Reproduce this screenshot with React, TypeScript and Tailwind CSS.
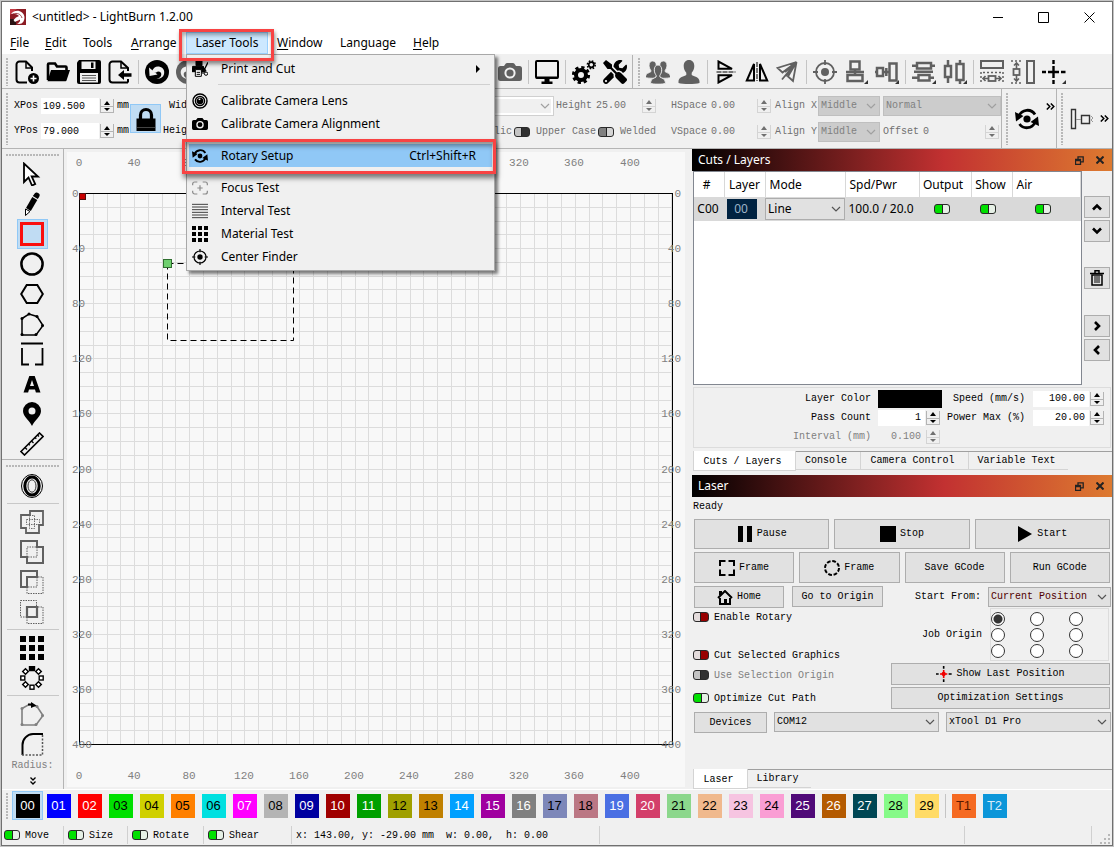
import React, { useState } from "react";
import type { ReactNode } from "react";
import { FaTools } from "react-icons/fa";

const MONO = "font-['Liberation_Mono',monospace] text-[10px] leading-3";
const UI = "font-['Noto_Sans',sans-serif] text-[12px] leading-4";

type IconProps = { children: ReactNode; size?: number; color?: string; sw?: number };

function Ico({ children, size = 24, color = "#000", sw = 2 }: IconProps) {
  return (
    <svg
      width={size}
      height={size}
      viewBox="0 0 24 24"
      fill="none"
      stroke={color}
      strokeWidth={sw}
      className="block shrink-0"
      aria-hidden="true"
    >
      {children}
    </svg>
  );
}

const GRAY = "#606060";

const NewFile = () => (
  <Ico sw={2}>
    <path d="M12 22.500H4.500a3 3 0 0 1-3-3V4.500a3 3 0 0 1 3-3H11l6 6V11" />
    <path d="M11 1.500V8h6" strokeWidth={1.500} />
    <circle cx="18.500" cy="18.500" r="5.500" fill="#000" stroke="none" />
    <path d="M18.500 15.500v6M15.500 18.500h6" stroke="#fff" strokeWidth={1.600} />
  </Ico>
);
const OpenFile = () => (
  <Ico>
    <path d="M2 20V4.500C2 4 2.300 3.500 3 3.500h6l2 3h8.500c.8 0 1 .5 1 1V10" strokeWidth={2.600} />
    <path d="M5 10h19l-3.500 10.500a1 1 0 0 1-1 .8H1.500z" fill="#000" stroke="none" />
  </Ico>
);
const SaveFile = () => (
  <Ico>
    <path d="M2 0h20a2 2 0 0 1 2 2v20a2 2 0 0 1-2 2H2a2 2 0 0 1-2-2V2.500z" fill="#000" stroke="none" />
    <path d="M4.500 1.500h14V9h-14z" fill="#f0f0f0" stroke="none" />
    <path d="M14 2.500h2.500V8H14z" fill="#000" stroke="none" />
    <path d="M3 13h18v9.500H3z" fill="#f0f0f0" stroke="none" />
    <path d="M5 15.500h14M5 18h14M5 20.500h14" strokeWidth={1} stroke="#555" />
  </Ico>
);
const ExportFile = () => (
  <Ico>
    <path d="M20 22.500H4.500a3 3 0 0 1-3-3V4.500a3 3 0 0 1 3-3H13l7 6.500V11M20 19v3.500" />
    <path d="M13 1.500V8h7" strokeWidth={1.500} />
    <path d="M10 15l6-5v3.300h7.500v3.400H16V20z" fill="#000" stroke="none" />
  </Ico>
);
const Undo = ({ color = "#000", flip = false }: { color?: string; flip?: boolean }) => (
  <Ico color={color}>
    <g transform={flip ? "translate(24 0) scale(-1 1)" : undefined}>
      <circle cx="12" cy="12" r="12" fill={color} stroke="none" />
      <path
        d="M7 11.500C8 8 11 6 14 6.600c4 .7 6 4 5 7.600-.8 3-3.800 5-7.500 4.600 3-.5 5-2.300 4.800-4.800-.2-2.400-3-3.500-5.500-1.300"
        fill="#f0f0f0"
        stroke="none"
      />
      <path d="M4 7.500l.6 8.500 7.900-1.500z" fill="#f0f0f0" stroke="none" />
    </g>
  </Ico>
);
const Camera = ({ color = "#000", size = 24 }: { color?: string; size?: number }) => (
  <Ico size={size}>
    <path
      d="M2.500 6H6l1.800-2.400c.3-.4.700-.6 1.200-.6h6c.5 0 .9.200 1.200.6L18 6h3.500A2.500 2.500 0 0 1 24 8.500v10a2.500 2.500 0 0 1-2.500 2.500h-19A2.500 2.500 0 0 1 0 18.500v-10A2.500 2.500 0 0 1 2.500 6z"
      fill={color}
      stroke="none"
    />
    <circle cx="12" cy="13" r="4.600" stroke="#f0f0f0" strokeWidth={2} />
  </Ico>
);
const Monitor = () => (
  <Ico>
    <rect x="1" y="1" width="22" height="17" rx="1" />
    <path d="M1 16.500h22v2H1zM9.500 18h5v4h-5zM6.500 21.500h11V24h-11z" fill="#000" stroke="none" />
  </Ico>
);
const Gears = () => (
  <Ico>
    <circle cx="9" cy="15" r="5" strokeWidth={4} />
    <circle cx="9" cy="15" r="7.600" strokeWidth={3} strokeDasharray="3.200 2.769" />
    <circle cx="19.300" cy="4.800" r="2.600" strokeWidth={1.700} />
    <circle cx="19.300" cy="4.800" r="3.900" strokeWidth={1.600} strokeDasharray="1.600 1.463" />
  </Ico>
);
const personPath = "M12 0c3.300 0 5.300 2.500 5.300 6 0 3-1.300 5.500-2.600 6.700v2.300c2 1.400 7.800 2 7.800 6.500V23c-4 1.300-17 1.300-21 0v-1.500C1.500 17 7.300 16.400 9.300 15v-2.300C8 11.500 6.700 9 6.700 6c0-3.500 2-6 5.300-6z";
const Person = () => (
  <Ico>
    <path d={personPath} fill={GRAY} stroke="none" />
  </Ico>
);
const People = () => (
  <Ico>
    <g fill={GRAY} stroke="#f0f0f0" strokeWidth={1.200}>
      <path d={personPath} transform="translate(-1.500 1) scale(.68 .72)" />
      <path d={personPath} transform="translate(9.200 1) scale(.68 .72)" />
      <path d={personPath} transform="translate(3.600 5) scale(.7 .8)" />
    </g>
  </Ico>
);
const FlipV = () => (
  <Ico>
    <path d="M4.500 1.500v7.300H18zM4.500 22.500v-7.300H18z" />
    <path d="M2.500 12h19" stroke="#777" strokeWidth={2} strokeDasharray="5 1" />
  </Ico>
);
const FlipH = () => (
  <Ico>
    <path d="M9 4v16.500H1.800zM15 4v16.500h7.200z" />
    <path d="M12 2v19" stroke="#777" strokeWidth={2} strokeDasharray="5 1" />
  </Ico>
);
const Plane = () => (
  <Ico color={GRAY} sw={1.800}>
    <path d="M20.500 2L1.500 8l5 4.500zM20.500 2l-3.500 19-5-4.500zM20.500 2L9 12M20.500 2L6 19.500M20.500 2L10 16" />
  </Ico>
);
const Target = ({ color = GRAY, size = 24 }: { color?: string; size?: number }) => (
  <Ico color={color} size={size} sw={1.800}>
    <circle cx="12" cy="12" r="9" />
    <circle cx="12" cy="12" r="4" fill={color} stroke="none" />
    <path d="M12 0v5M12 19v5M0 12h5M19 12h5" />
  </Ico>
);
const Corner = () => <path d="M24 20v4h-4z" fill="#333" stroke="none" />;
const AlignV = () => (
  <Ico color={GRAY} sw={2.500}>
    <rect x="6.500" y="1.500" width="9" height="8" />
    <rect x="3.500" y="15" width="15" height="6" />
    <path d="M11 9.500V15M2 12h18" />
    <Corner />
  </Ico>
);
const AlignH = () => (
  <Ico color={GRAY} sw={2.500}>
    <rect x="2" y="8" width="6" height="8" />
    <rect x="14.500" y="3.500" width="7" height="17" />
    <path d="M8 12h7M0 12h2M11.300 8v8" />
    <Corner />
  </Ico>
);
const DistV = () => (
  <Ico color={GRAY} sw={2.500}>
    <rect x="5" y="3" width="14" height="5.500" />
    <rect x="6.500" y="15" width="11" height="5.500" />
    <path d="M0 5.700h5M19 5.700h4M0 17.700h6M18 17.700h4M2 11.800h19" />
    <Corner />
  </Ico>
);
const DistH = () => (
  <Ico color={GRAY} sw={2.500}>
    <rect x="2" y="6" width="6" height="11" />
    <rect x="13.500" y="4" width="7" height="16" />
    <path d="M5 0v6M5 17v6M17 0v4M17 20v4" />
    <Corner />
  </Ico>
);
const SpaceW = () => (
  <Ico color={GRAY} sw={2}>
    <rect x="1" y="1" width="22" height="7" />
    <path d="M1 12v12M23 12v12M3 12.500h19" strokeDasharray="2 2" strokeWidth={1.500} />
    <rect x="8.500" y="16" width="7" height="5" strokeWidth={1.800} />
    <path d="M3 18.500h5M16 18.500h5M5.500 16L3 18.500 5.500 21M18.500 16l2.500 2.500-2.500 2.500" strokeWidth={1.600} />
  </Ico>
);
const SpaceH = () => (
  <Ico color={GRAY} sw={2}>
    <rect x="16" y="1" width="7" height="22" />
    <path d="M0 1h11M0 23h11" strokeDasharray="2 2" strokeWidth={1.500} />
    <rect x="2.500" y="9" width="6" height="6" strokeWidth={1.800} />
    <path d="M5.500 3v6M5.500 15v6M3 5.500L5.500 3 8 5.500M3 18.500L5.500 21 8 18.500" strokeWidth={1.600} />
  </Ico>
);
const Cross = ({ red = false, size = 24 }: { red?: boolean; size?: number }) => (
  <Ico size={size} sw={2.400}>
    <path d="M11.500 0v4M11.500 20v4M0 12h4M19 12h4.500" />
    <path d="M11.500 6v12M6 12h11" stroke={red ? "#f00000" : "#000"} />
    {red ? <circle cx="11.500" cy="12" r="3.200" fill="#f00000" stroke="none" /> : <Corner />}
  </Ico>
);
const Lock = () => (
  <Ico>
    <path d="M6.500 12V8a5.500 5.500 0 0 1 11 0v4" strokeWidth={3.200} />
    <path d="M2.500 11.500h19V24h-19z" fill="#000" stroke="none" />
    <path d="M3 20.500h18" stroke="#444" strokeWidth={1} />
  </Ico>
);
const Rotary = ({ size = 24 }: { size?: number }) => (
  <Ico size={size} sw={2.800}>
    <path d="M4 9a9 9 0 0 1 16-1.500M20 15.500A9 9 0 0 1 4.500 17" />
    <circle cx="12" cy="12" r="3.600" fill="#000" stroke="none" />
    <path d="M0 5l1 9.500L8.500 9zM24 19l-1-9.500-7.500 5.500z" fill="#000" stroke="none" />
  </Ico>
);
const More = () => (
  <svg width="9" height="7" fill="none" stroke="#000" strokeWidth="1.500" className="shrink-0" aria-hidden="true">
    <path d="M.8.500l3 3-3 3M4.800.500l3 3-3 3" />
  </svg>
);
const Printer = () => (
  <Ico size={16} sw={1.500}>
    <path d="M6 0h9v7H6zM1 8h16v3l3 5H0v-6z" fill="#000" />
    <path d="M5 13h9v10H5z" fill="#fff" />
    <path d="M7 17h5M7 20h5" />
    <path d="M24 2l-5 10 2 3M16 8l3 6" strokeWidth={2} />
    <circle cx="21" cy="19" r="2.500" />
    <circle cx="16.500" cy="17" r="1.500" />
  </Ico>
);
const Lens = () => (
  <Ico size={16} sw={2.200}>
    <circle cx="12" cy="12" r="10.500" />
    <circle cx="12" cy="12" r="6.800" />
    <circle cx="12" cy="12" r="3.800" fill="#000" />
    <path d="M10 9.500h2.500" stroke="#fff" />
  </Ico>
);
const FocusIcon = () => (
  <Ico size={16} color="#8a8a8a" sw={1.800}>
    <path d="M1 8V6a3 3 0 0 1 3-3h4M16 3h4a3 3 0 0 1 3 3v2M23 16v2a3 3 0 0 1-3 3h-4M8 21H4a3 3 0 0 1-3-3v-2M12 8v8M8 12h8" />
  </Ico>
);
const LinesIcon = () => (
  <Ico size={16} color="#333" sw={1.400}>
    <path d="M0 2h24M0 6h24M0 10h24M0 14h24M0 18h24M0 22h24" />
  </Ico>
);
const DotsGrid = ({ size = 24 }: { size?: number }) => (
  <Ico size={size}>
    <path
      d="M0 0h6v6H0zM9 0h6v6H9zM18 0h6v6h-6zM0 9h6v6H0zM9 9h6v6H9zM18 9h6v6h-6zM0 18h6v6H0zM9 18h6v6H9zM18 18h6v6h-6z"
      fill="#000"
      stroke="none"
    />
  </Ico>
);

const cursorI = <Ico sw={1.800}><path d="M4 1.500V20l4.500-4.500 3.500 8 3.200-1.500-3.500-7.500H18z" fill="#fff" /></Ico>;
const pencilI = (
  <Ico>
    <path d="M14 2.500c1-2 2-2.500 3.500-1.800l1 .5c1.500.8 1.500 2 .7 3.500L17.800 7l-5-3z" fill="#000" stroke="none" />
    <path d="M12.300 5l5 3-6.500 11-4.800-3z" fill="#000" stroke="none" />
    <path d="M5.500 17l4.500 2.500-4.500 4z" strokeWidth={1} fill="#fff" />
  </Ico>
);
const rectI = <Ico><rect x="1.500" y="1.500" width="21" height="21" stroke="#fa0f0f" strokeWidth={3} /></Ico>;
const circleI = <Ico><circle cx="12" cy="12" r="10.600" strokeWidth={2.500} /></Ico>;
const hexI = <Ico><path d="M1.200 12L6.700 3h10.600l5.500 9-5.500 9H6.700z" /></Ico>;
const polyI = (
  <Ico sw={1.500}>
    <path d="M2 23V6.500L9 2l8 2.500 6 9L16 23z" />
    <g fill="#000" stroke="none"><circle cx="2" cy="6.500" r="1.500" /><circle cx="9" cy="2" r="1.500" /><circle cx="17" cy="4.500" r="1.500" /><circle cx="22.500" cy="13.500" r="1.500" /><circle cx="16" cy="22.500" r="1.500" /><circle cx="2" cy="22.500" r="1.500" /></g>
  </Ico>
);
const frameI = <Ico sw={1.800}><path d="M1 1.500h22M2 6v16.500h7M22.500 6v16.500H15" /></Ico>;
const textI = <Ico><path d="M3.500 20.500L9.300 4h5.400l5.800 16.500h-4.600l-.9-3H9l-.9 3zM10 14h4l-2-6z" fill="#000" stroke="none" fillRule="evenodd" /></Ico>;
const pinI = <Ico><path d="M12 0a9 9 0 0 1 9 9c0 6-6.500 9-9 15-2.500-6-9-9-9-15a9 9 0 0 1 9-9zm0 5.500a3.500 3.500 0 1 0 0 7 3.500 3.500 0 0 0 0-7z" fill="#000" stroke="none" fillRule="evenodd" /></Ico>;
const rulerI = (
  <Ico sw={1.600}>
    <path d="M1 19.500L19.500 1 23 4.500 4.500 23z" />
    <path d="M5 15.500l2 2M8.500 12l1.300 1.300M11.500 9l2 2M15 5.500l1.300 1.300M17.500 3l1.500 1.500" strokeWidth={1.300} />
  </Ico>
);
const offsetI = (
  <Ico>
    <ellipse cx="12" cy="12" rx="10.500" ry="11.500" strokeWidth={1} />
    <ellipse cx="12" cy="12" rx="7.200" ry="9" strokeWidth={3} />
    <ellipse cx="12" cy="12" rx="4" ry="6.200" strokeWidth={0.800} />
  </Ico>
);
const unionI = (
  <Ico color={GRAY} sw={1.800}>
    <path d="M10 1h13v14h-4v8H6v-5H1V5h9z" />
    <path d="M6.500 9.500h13v5h-13zM9.500 5.500h5v13h-5z" strokeWidth={0.900} strokeDasharray="1.500 1" />
  </Ico>
);
const weldI = (
  <Ico color={GRAY} sw={2}>
    <path d="M1 1h16v6h6v16H7v-6H1z" />
    <path d="M7 7h10v10H7z" strokeWidth={1} strokeDasharray="1.500 1" />
  </Ico>
);
const subI = (
  <Ico color={GRAY} sw={2}>
    <path d="M1 1h16v6H7v10H1z" />
    <path d="M7 17v6.500h16V7h-6v10H7" strokeWidth={1} strokeDasharray="1.500 1" />
  </Ico>
);
const interI = (
  <Ico color={GRAY} sw={1}>
    <path d="M.5.500h16V7M7 17H.5V.5M7 17v6.500h16V7h-6" strokeDasharray="1.500 1" />
    <path d="M7 7h10v10H7z" strokeWidth={2.200} />
  </Ico>
);
const circArrI = (
  <Ico sw={1.400}>
    <path d="M9.500 0h5v4.500h-5z" fill="#000" />
    <g fill="#fff">
      {[45, 90, 135, 180, 225, 270, 315].map((a) => (
        <rect key={a} x="10" y=".8" width="4" height="4" transform={`rotate(${a} 12 12)`} />
      ))}
    </g>
  </Ico>
);
const startPtI = (
  <Ico color="#808080" sw={1.600}>
    <path d="M2 23V6.500L9 2.500l8 2 6 9L16 23z" />
    <g fill="#808080" stroke="none"><circle cx="2" cy="6.500" r="1.500" /><circle cx="17" cy="4.500" r="1.500" /><circle cx="22.500" cy="13.500" r="1.500" /><circle cx="16" cy="22.500" r="1.500" /><circle cx="2" cy="22.500" r="1.500" /></g>
    <path d="M8 2.500h5" stroke="#000" strokeWidth={2} />
    <path d="M11 0l5.500 3.500L11 6z" fill="#000" stroke="none" />
  </Ico>
);
const radiusI = (
  <Ico>
    <path d="M2.500 23V13A11 11 0 0 1 13 2h10" strokeWidth={2} />
    <path d="M22.500 3v20H2" stroke="#555" strokeWidth={1.500} strokeDasharray="2 1.500" />
  </Ico>
);

function Handle({ row = false }: { row?: boolean }) {
  return row ? (
    <div className="mx-1 my-px h-[2px] shrink-0 self-stretch bg-[repeating-linear-gradient(90deg,#b8b8b8_0_2px,transparent_2px_3px)]" />
  ) : (
    <div className="mr-px w-[2px] shrink-0 self-stretch bg-[repeating-linear-gradient(180deg,#b8b8b8_0_2px,transparent_2px_3px)]" />
  );
}

function ToolBtn({ label, children }: { label: string; children?: ReactNode }) {
  return (
    <button aria-label={label} className="flex h-[31px] w-[31px] shrink-0 items-center justify-center pl-px">
      {children}
    </button>
  );
}
const Sep = () => <div className="ml-[3px] mr-[2px] h-6 w-px shrink-0 bg-[#c4c4c4]" />;

function Spin({ dim = false, label }: { dim?: boolean; label: string }) {
  const fill = dim ? "#707070" : "#000";
  const edge = dim ? "border-[#d4d4d4]" : "border-[#b4b4b4]";
  return (
    <div className="flex h-[14px] w-[14px] shrink-0 flex-col">
      <button aria-label={label + " up"} className={"flex h-[7px] items-center justify-center border-x " + edge}>
        <svg width="6" height="4" aria-hidden="true"><path d="M0 4l3-4 3 4z" fill={fill} /></svg>
      </button>
      <button aria-label={label + " down"} className={"flex h-[7px] items-center justify-center border-x border-y " + edge}>
        <svg width="6" height="3" aria-hidden="true"><path d="M0 0l3 3 3-3z" fill={fill} /></svg>
      </button>
    </div>
  );
}

const toggleLook = {
  green: "bg-[linear-gradient(90deg,#00e000_7px,#222_7px,#222_8px,#e6f0e6_8px)]",
  red: "bg-[linear-gradient(90deg,#e4dcdc_6px,#222_6px,#222_7px,#980000_7px)]",
  dark: "bg-[linear-gradient(90deg,#c4c4c4_6px,#222_6px,#222_7px,#303030_7px)]",
  gray: "bg-[linear-gradient(90deg,#808080_7px,#222_7px,#222_8px,#d4d4d4_8px)]",
};

function Toggle({ label, look, on = false, id }: { label: string; look: keyof typeof toggleLook; on?: boolean; id?: string }) {
  return (
    <input
      id={id}
      type="checkbox"
      aria-label={label}
      defaultChecked={on}
      className={"h-[10px] w-4 shrink-0 appearance-none rounded-[3px] border border-[#2a2a2a] " + toggleLook[look]}
    />
  );
}

function Drop({ label, value, width = "", look = "border-[#adadad] bg-[#e1e1e1] text-black", font = MONO, height = "h-5", dim = false }: {
  label: string; value: string; width?: string; look?: string; font?: string; height?: string; dim?: boolean;
}) {
  return (
    <div className={"relative shrink-0 " + width}>
      <select aria-label={label} className={"block w-full appearance-none border pl-[2px] pr-4 outline-none " + height + " " + look + " " + font}>
        <option>{value}</option>
      </select>
      <svg width="10" height="6" className="pointer-events-none absolute right-1 top-1/2 -translate-y-1/2" aria-hidden="true">
        <path d="M1 1l4 4 4-4" fill="none" stroke={dim ? "#a0a0a0" : "#555"} strokeWidth="1.200" />
      </svg>
    </div>
  );
}

function PosField({ label, value }: { label: string; value: string }) {
  const id = "field-" + label;
  return (
    <div className="flex h-[18px] items-center">
      <label htmlFor={id} className="w-[27px]">{label}</label>
      <input id={id} defaultValue={value} className="h-4 w-[58px] bg-white px-[2px] outline-none" />
      <div className="mx-px"><Spin label={label} /></div>
      <span className="pl-[2px]">mm</span>
    </div>
  );
}

function DimField({ label, value, lw, iw }: { label: string; value: string; lw: string; iw: string }) {
  const id = "text-" + label;
  return (
    <div className="flex items-center">
      <label htmlFor={id} className={lw}>{label}</label>
      <input id={id} defaultValue={value} className={"bg-transparent outline-none " + iw} />
      <Spin dim label={label} />
    </div>
  );
}

const menus: [string, string][] = [
  ["File", "w-[35px]"],
  ["Edit", "w-[38px]"],
  ["Tools", "w-12"],
  ["Arrange", "w-[63px]"],
  ["Laser Tools", "w-[82px]"],
  ["Window", "ml-px w-[63px]"],
  ["Language", "w-[73px]"],
  ["Help", "w-11"],
];
const underlined = ["File", "Edit", "Arrange", "Window", "Help"];

type Item = { label: string; icon: ReactNode; keys?: string; sub?: boolean; active?: boolean } | null;
const menuItems: Item[] = [
  { label: "Print and Cut", icon: <Printer />, sub: true },
  null,
  { label: "Calibrate Camera Lens", icon: <Lens /> },
  { label: "Calibrate Camera Alignment", icon: <Camera size={16} /> },
  null,
  { label: "Rotary Setup", icon: <Rotary size={16} />, keys: "Ctrl+Shift+R", active: true },
  null,
  { label: "Focus Test", icon: <FocusIcon /> },
  { label: "Interval Test", icon: <LinesIcon /> },
  { label: "Material Test", icon: <DotsGrid size={16} /> },
  { label: "Center Finder", icon: <Target size={16} color="#000" /> },
];

function LaserMenu() {
  return (
    <div className="absolute left-0 top-[22px] z-20 w-[309px] border border-[#a8a8a8] bg-[#f0f0f0] p-[2px] shadow-[3px_3px_3px_rgba(0,0,0,0.5)]" role="menu">
      {menuItems.map((it, i) =>
        it === null ? (
          <div key={i} className="flex h-[9px] items-center pl-[29px] pr-[2px]"><div className="h-px w-full bg-[#d0d0d0]" /></div>
        ) : (
          <div key={i} className="relative">
            <button role="menuitem" className={"flex h-[23px] w-full items-center pl-[3px] pr-[12px] text-left " + (it.active ? "bg-[#90c8f6]" : "")}>
              {it.icon}
              <span className="ml-[13px] flex-1">{it.label}</span>
              {it.keys ? <span className="pr-1">{it.keys}</span> : null}
              {it.sub ? <svg width="4" height="8" aria-hidden="true"><path d="M0 0l4 4-4 4z" /></svg> : null}
            </button>
            {it.active ? (
              <div className="pointer-events-none absolute -bottom-[7px] -left-[7px] -right-[4px] -top-[5px] border-[3px] border-[#f84343] shadow-[1px_4px_5px_rgba(0,0,0,0.5),inset_1px_4px_5px_rgba(0,0,0,0.4)]" />
            ) : null}
          </div>
        )
      )}
    </div>
  );
}

const SCALE = 1.3775;
const OX = 12;
const OY = 41;
const BED_W = 593;
const BED_H = 551;
const tens = (n: number) => Array.from({ length: n }, (_, i) => i);

function Workspace() {
  return (
    <svg className="block h-full w-full font-['Liberation_Mono',monospace] text-[11px]" aria-label="Workspace">
      {tens(44).map((i) => (
        <rect key={"v" + i} x={Math.round(OX + i * 10 * SCALE)} y={OY} width="1" height={BED_H} fill="#dcdcdc" />
      ))}
      {tens(41).map((i) => (
        <rect key={"h" + i} x={OX} y={Math.round(OY + i * 10 * SCALE)} width={BED_W} height="1" fill="#dcdcdc" />
      ))}
      <rect x={OX + 0.5} y={OY + 0.5} width={BED_W} height={BED_H} fill="none" stroke="#000" />
      {tens(11).map((i) => {
        const p = i * 40 * SCALE;
        return (
          <g key={i} fill="#808080">
            <text x={Math.round(OX - 0.5 + p)} y="14" textAnchor="middle">{i * 40}</text>
            <text x={Math.round(OX - 0.5 + p)} y="627" textAnchor="middle">{i * 40}</text>
            <text x={OX - 7} y={Math.round(OY + 4 + p)}>{i * 40}</text>
            <text x={OX + 602} y={Math.round(OY + 4 + p)} textAnchor="end">{i * 40}</text>
          </g>
        );
      })}
      <rect x="12.500" y="41.500" width="6" height="6" fill="#c80000" stroke="#501010" />
      <rect x="100.500" y="111.500" width="126" height="77" fill="none" stroke="#000" strokeDasharray="6 4" />
      <rect x="96.500" y="107.500" width="8" height="8" fill="#6fd06f" stroke="#2f6f2f" />
    </svg>
  );
}

function DockTitle({ title }: { title: string }) {
  return (
    <div className={"flex h-[22px] shrink-0 items-center bg-[linear-gradient(90deg,#000_0%,#c23131_60%,#dd7a30_100%)] pl-[6px] pr-2 text-white " + UI}>
      <h2 className="flex-1">{title}</h2>
      <button aria-label={"Float " + title} className="mr-3">
        <svg width="9" height="9" fill="none" stroke="#222" aria-hidden="true"><path d="M.5 3.500h5v5h-5zM.5 4.500h5M3 3V.8h5.200v5H6" strokeWidth="1.300" /></svg>
      </button>
      <button aria-label={"Close " + title}>
        <svg width="8" height="8" fill="none" stroke="#222" aria-hidden="true"><path d="M.5.500l7 7M7.500.500l-7 7" strokeWidth="2" /></svg>
      </button>
    </div>
  );
}

function Tabs({ items, pads }: { items: string[]; pads: string[] }) {
  return (
    <div className="flex border-t border-[#a0a0a0]" role="tablist">
      {items.map((t, i) => (
        <button
          key={t}
          role="tab"
          className={
            (i === 0 ? "-mt-px h-5 border border-t-0 border-[#d4d4d4] bg-white pt-[2px] pr-1 " : "h-[18px] border-b border-r border-[#d4d4d4] pt-px pr-1 last:border-r-0 ") + pads[i]
          }
        >
          {t}
        </button>
      ))}
    </div>
  );
}

const BTN = "flex items-center justify-center border border-[#adadad] bg-[#e1e1e1] ";

function SideBtn({ d, label, gap = "" }: { d: string; label: string; gap?: string }) {
  return (
    <button aria-label={label} className={BTN + "h-[22px] w-[26px] " + gap}>
      <svg width="10" height="10" fill="none" stroke="#000" strokeWidth="2.600" aria-hidden="true"><path d={d} /></svg>
    </button>
  );
}

const TH = "border-r border-[#d8d8d8] p-0 font-normal ";

function CutsPanel() {
  return (
    <section>
      <DockTitle title="Cuts / Layers" />
      <div className="flex pl-px">
        <div className={"h-[214px] flex-1 border border-[#828790] bg-white " + UI}>
          <table className="w-full table-fixed border-collapse">
            <colgroup>
              <col className="w-[30px]" /><col className="w-[41px]" /><col className="w-[80px]" /><col className="w-[74px]" />
              <col className="w-[52px]" /><col className="w-[41px]" /><col />
            </colgroup>
            <thead>
              <tr className="h-[25px]">
                <th className={TH + "pr-1 text-center"}>#</th>
                <th className={TH + "text-center"}>Layer</th>
                <th className={TH + "pl-1 text-left"}>Mode</th>
                <th className={TH + "pl-1 text-left"}>Spd/Pwr</th>
                <th className={TH + "pr-1 text-center"}>Output</th>
                <th className={TH + "pr-[2px] text-center"}>Show</th>
                <th className={TH + "pl-1 text-left"}>Air</th>
              </tr>
            </thead>
            <tbody>
              <tr className="h-6 bg-[#d9d9d9]">
                <td className="p-0 pr-[2px] text-center">C00</td>
                <td className="p-0"><div className="ml-[3px] flex h-5 w-[30px] items-center justify-center bg-[#002240] pr-[2px] text-[#9db4c8]">00</div></td>
                <td className="p-0"><Drop label="Mode" value="Line" font={UI} height="h-[22px]" look="border-[#adadad] bg-[#e1e1e1] text-black" /></td>
                <td className="p-0 pr-[2px] text-center">100.0 / 20.0</td>
                <td className="p-0"><div className="flex pl-[15px]"><Toggle label="Output" look="green" on /></div></td>
                <td className="p-0"><div className="flex pl-[9px]"><Toggle label="Show" look="green" on /></div></td>
                <td className="p-0"><div className="flex pl-[23px]"><Toggle label="Air" look="green" on /></div></td>
              </tr>
            </tbody>
          </table>
        </div>
        <div className="flex flex-col pl-[2px] pr-[2px] pt-[25px]">
          <SideBtn label="Move up" d="M1 7.500l4-4 4 4" />
          <SideBtn label="Move down" d="M1 2.500l4 4 4-4" gap="mt-[2px]" />
          <button aria-label="Delete" className={BTN + "mt-[25px] h-[22px] w-[26px]"}>
            <svg width="14" height="16" fill="none" stroke="#000" aria-hidden="true"><path d="M0 3.500h14M5 3V.8h4V3" strokeWidth="1.500" /><path d="M2 5h10v10H2z" strokeWidth="1.500" /><path d="M5 6v7M7 6v7M9 6v7" /></svg>
          </button>
          <SideBtn label="Next" d="M3 1l4 4-4 4" gap="mt-[26px]" />
          <SideBtn label="Previous" d="M7 1L3 5l4 4" gap="mt-[2px]" />
        </div>
      </div>
      <div className={"ml-px mr-px mt-[2px] grid h-[61px] grid-cols-[1fr_64px_auto_71px] content-center items-center gap-x-[5px] border border-[#dcdcdc] pr-[6px] text-right " + MONO}>
        <span className="pr-[2px] leading-[19px]">Layer Color</span>
        <button aria-label="Layer Color" className="h-[18px] bg-black" />
        <label htmlFor="speed" className="pr-[3px]">Speed (mm/s)</label>
        <div className="flex items-center"><input id="speed" defaultValue="100.00" className="mr-px h-4 w-[56px] bg-white pr-1 text-right outline-none" /><Spin label="Speed" /></div>
        <label htmlFor="pass" className="pr-[2px] leading-[19px]">Pass Count</label>
        <div className="flex items-center"><input id="pass" defaultValue="1" className="mr-px h-4 w-[47px] bg-white pr-1 text-right outline-none" /><Spin label="Pass Count" /></div>
        <label htmlFor="power" className="pr-[3px]">Power Max (%)</label>
        <div className="flex items-center"><input id="power" defaultValue="20.00" className="mr-px h-4 w-[56px] bg-white pr-1 text-right outline-none" /><Spin label="Power Max" /></div>
        <label htmlFor="interval" className="pr-[2px] leading-[19px] text-[#808080]">Interval (mm)</label>
        <div className="flex items-center text-[#808080]"><input id="interval" defaultValue="0.100" className="mr-px h-4 w-[47px] bg-transparent pr-1 text-right outline-none" /><Spin dim label="Interval" /></div>
      </div>
      <div className={"mt-[3px] pl-px " + MONO}>
        <Tabs items={["Cuts / Layers", "Console", "Camera Control", "Variable Text"]} pads={["w-[103px]", "w-[65px]", "w-[108px]", "w-[99px]"]} />
      </div>
    </section>
  );
}

function LabeledToggle({ label, look, gap, on = false }: { label: string; look: keyof typeof toggleLook; gap: string; on?: boolean }) {
  const id = label.replace(/ /g, "-").toLowerCase();
  return (
    <div className={"flex h-4 items-center " + gap + (look === "dark" ? " text-[#808080]" : "")}>
      <Toggle id={id} label={label} look={look} on={on} />
      <label htmlFor={id} className="pl-[5px] pt-px">{label}</label>
    </div>
  );
}

function LaserPanel() {
  return (
    <section className={"mt-1 flex flex-1 flex-col " + MONO}>
      <DockTitle title="Laser" />
      <p className="pb-[2px] pl-px leading-5">Ready</p>
      <div className="grid grid-cols-3 gap-[5px] pl-[2px] pr-[2px]">
        <button className={BTN + "h-[30px] gap-1"}><svg width="16" height="16" aria-hidden="true"><path d="M1 0h5v16H1zM10 0h5v16h-5z" /></svg>Pause</button>
        <button className={BTN + "h-[30px] gap-1"}><svg width="16" height="16" aria-hidden="true"><path d="M0 0h16v16H0z" /></svg>Stop</button>
        <button className={BTN + "h-[30px] gap-1"}><svg width="16" height="16" aria-hidden="true"><path d="M1 0l14 8-14 8z" /></svg>Start</button>
      </div>
      <div className="mt-[3px] grid grid-cols-4 gap-[5px] pl-[2px] pr-[2px]">
        <button className={BTN + "h-[31px] gap-1"}>
          <svg width="16" height="16" fill="none" stroke="#000" strokeWidth="2" aria-hidden="true"><path d="M1 6V1h5.500M9.500 1H15v5M15 9.500V15H9.500M6.500 15H1V9.500" /></svg>Frame
        </button>
        <button className={BTN + "h-[31px] gap-1"}>
          <svg width="16" height="16" fill="none" stroke="#000" strokeWidth="2" aria-hidden="true"><circle cx="8" cy="8" r="7" strokeDasharray="3.800 1.700" /></svg>Frame
        </button>
        <button className={BTN + "h-[31px]"}>Save GCode</button>
        <button className={BTN + "h-[31px]"}>Run GCode</button>
      </div>
      <div className="mt-[3px] flex items-start pl-[2px] pr-px">
        <button className={BTN + "h-[22px] w-[90px] gap-1"}>
          <svg width="16" height="15" aria-hidden="true"><path d="M1 8l7-7 7 7" fill="none" stroke="#000" strokeWidth="2" /><path d="M2 1h3v4H2z" /><path d="M3 8v6h10V8" fill="none" stroke="#000" strokeWidth="2" /><path d="M7 9h3v6H7z" /></svg>Home
        </button>
        <button className={BTN + "ml-2 h-[21px] w-[91px]"}>Go to Origin</button>
        <span className="flex-1 pr-[7px] text-right leading-[22px]">Start From:</span>
        <Drop label="Start From" value="Current Position" width="mt-px w-[123px]" look="border-[#adadad] bg-[#e1e1e1] text-[#500000]" />
      </div>
      <div className="flex pl-px pr-px">
        <div className="flex flex-1 flex-col">
          <LabeledToggle label="Enable Rotary" look="red" gap="mt-px" />
          <LabeledToggle label="Cut Selected Graphics" look="red" gap="mt-[22px]" />
          <LabeledToggle label="Use Selection Origin" look="dark" gap="mt-1" />
          <LabeledToggle label="Optimize Cut Path" look="green" gap="mt-[7px]" on />
        </div>
        <div className="flex w-[220px] flex-col">
          <div className="mr-[2px] flex items-center justify-end gap-2">
            <span>Job Origin</span>
            <div className="grid h-[53px] w-[119px] grid-cols-3 content-center gap-y-[2px] border border-[#dcdcdc]" role="radiogroup" aria-label="Job Origin">
              {tens(9).map((i) => (
                <input
                  key={i}
                  type="radio"
                  name="origin"
                  aria-label={"Origin " + (i + 1)}
                  defaultChecked={i === 0}
                  className="h-[14px] w-[14px] appearance-none rounded-full border border-[#333] bg-white checked:bg-[radial-gradient(circle,#333_4px,#fff_5px)]"
                />
              ))}
            </div>
          </div>
          <button className={BTN + "mr-px mt-[2px] h-[22px] gap-1"}><Cross red size={16} />Show Last Position</button>
          <button className={BTN + "mr-px mt-[2px] h-[22px]"}>Optimization Settings</button>
        </div>
      </div>
      <div className="mt-[3px] flex gap-[7px] pl-[2px] pr-px">
        <button className={BTN + "h-[21px] w-[73px]"}>Devices</button>
        <div className="flex-1"><Drop label="Port" value="COM12" /></div>
        <div className="flex-1"><Drop label="Device" value="xTool D1 Pro" /></div>
      </div>
      <div className="mt-auto pl-px"><Tabs items={["Laser", "Library"]} pads={["w-[55px]", "w-[63px]"]} /></div>
    </section>
  );
}

const swatches: [string, string, string][] = [
  ["00", "bg-[#000000]", "text-white"], ["01", "bg-[#0000ff]", "text-white"], ["02", "bg-[#ff0000]", "text-white"],
  ["03", "bg-[#00e000]", "text-black"], ["04", "bg-[#d0d000]", "text-black"], ["05", "bg-[#ff8000]", "text-black"],
  ["06", "bg-[#00e0e0]", "text-black"], ["07", "bg-[#ff00ff]", "text-white"], ["08", "bg-[#b4b4b4]", "text-black"],
  ["09", "bg-[#0000a0]", "text-white"], ["10", "bg-[#a00000]", "text-white"], ["11", "bg-[#00a000]", "text-white"],
  ["12", "bg-[#a0a000]", "text-black"], ["13", "bg-[#c08000]", "text-black"], ["14", "bg-[#00a0ff]", "text-white"],
  ["15", "bg-[#a000a0]", "text-white"], ["16", "bg-[#808080]", "text-white"], ["17", "bg-[#7d87b9]", "text-black"],
  ["18", "bg-[#bb7784]", "text-black"], ["19", "bg-[#4a6fe3]", "text-white"], ["20", "bg-[#d33f6a]", "text-white"],
  ["21", "bg-[#8cd78c]", "text-black"], ["22", "bg-[#f0b98d]", "text-black"], ["23", "bg-[#f6c4e1]", "text-black"],
  ["24", "bg-[#fa9ed4]", "text-black"], ["25", "bg-[#500a78]", "text-white"], ["26", "bg-[#b45a00]", "text-white"],
  ["27", "bg-[#004754]", "text-white"], ["28", "bg-[#86fa88]", "text-black"], ["29", "bg-[#ffdb66]", "text-black"],
];

const SideSep = () => <div className="mb-[3px] mt-[2px] h-px w-[52px] shrink-0 bg-[#c8c8c8]" />;

function SideTool({ label, children, active = false }: { label: string; children: ReactNode; active?: boolean }) {
  return (
    <button aria-label={label} className={"flex h-[30px] w-[31px] shrink-0 items-center justify-center pr-px " + (active ? "border border-[#90c8f6] bg-[#c0dcf3]" : "")}>
      {children}
    </button>
  );
}

function StatusToggle({ label, width }: { label: string; width: string }) {
  const id = "status-" + label;
  return (
    <div className={"flex items-center border-r border-[#d0d0d0] " + width}>
      <Toggle id={id} label={label} look="green" on />
      <label htmlFor={id} className="pl-[5px] pt-px">{label}</label>
    </div>
  );
}

export default function App() {
  const [open, setOpen] = useState(true);
  return (
    <div className="flex min-h-screen bg-[#c4c4c4] p-px text-black">
      <div className="flex min-w-0 flex-1 flex-col border border-[#707070] bg-[#f0f0f0]">
        <header className={"flex h-[30px] shrink-0 items-center bg-white pl-2 " + UI}>
          <svg width="16" height="16" viewBox="0 0 16 16" aria-hidden="true">
            <path d="M0 0h16v16H0z" fill="#8c1c24" />
            <path d="M0 0h7L0 6z" fill="#c43a44" />
            <path d="M0 10h6v6H0z" fill="#2a1414" />
            <path d="M1 5C4 1 9 1 12 3.500c3 2.500 3 6 1.500 9C12 15 9 15.500 7 14.500c2-.5 3.500-2 3-4-1.500 1.500-3.500 1-5 2.500L3.500 11 6 8.500 9 7C7 5 4 4.500 1 5z" fill="#fff" />
            <path d="M3 5c4-1.500 8 0 9 4" fill="none" stroke="#8c1c24" strokeWidth=".8" />
          </svg>
          <h1 className="flex-1 pl-[6px]">&lt;untitled&gt; - LightBurn 1.2.00</h1>
          <div className="flex items-center gap-[35px] pr-[17px]">
            <button aria-label="Minimize"><svg width="11" height="11" stroke="#000" aria-hidden="true"><path d="M1 5.500h10" /></svg></button>
            <button aria-label="Maximize"><svg width="11" height="11" fill="none" stroke="#000" aria-hidden="true"><path d="M.5.500h10v10H.5z" /></svg></button>
            <button aria-label="Close"><svg width="11" height="11" stroke="#000" aria-hidden="true"><path d="M.5.500l10 10M10.500.500l-10 10" /></svg></button>
          </div>
        </header>

        <nav className={"flex h-[22px] shrink-0 bg-white " + UI}>
          {menus.map(([m, w]) =>
            m === "Laser Tools" ? (
              <div key={m} className={"relative " + w}>
                <button onClick={() => setOpen(!open)} className="flex h-[22px] w-full items-center justify-center border border-[#99d1ff] bg-[#cce8ff]">{m}</button>
                {open ? <LaserMenu /> : null}
                <div className="pointer-events-none absolute -bottom-[7px] -left-[7px] -right-[6px] -top-[3px] z-30 border-[3px] border-[#f84343] shadow-[1px_3px_4px_rgba(0,0,0,0.45),inset_1px_3px_4px_rgba(0,0,0,0.35)]" />
              </div>
            ) : (
              <button key={m} className={"flex items-center pl-2 " + w}>
                {underlined.includes(m) ? <span><u className="underline-offset-2">{m[0]}</u>{m.slice(1)}</span> : m}
              </button>
            )
          )}
        </nav>

        <div className="flex h-[35px] shrink-0 items-center border-b border-[#b4b4b4] pl-1 pt-px">
          <div className="flex h-7"><Handle /></div>
          <div className="ml-[2px] flex items-center">
            <ToolBtn label="New"><NewFile /></ToolBtn>
            <ToolBtn label="Open"><OpenFile /></ToolBtn>
            <ToolBtn label="Save"><SaveFile /></ToolBtn>
            <ToolBtn label="Export"><ExportFile /></ToolBtn>
            <Sep />
            <ToolBtn label="Undo"><Undo /></ToolBtn>
            <ToolBtn label="Redo"><Undo flip color={GRAY} /></ToolBtn>
            <div className="w-[291px] shrink-0" />
            <ToolBtn label="Capture"><Camera color={GRAY} /></ToolBtn>
            <Sep />
            <ToolBtn label="Preview"><Monitor /></ToolBtn>
            <Sep />
            <ToolBtn label="Settings"><Gears /></ToolBtn>
            <ToolBtn label="Device Settings"><FaTools size={24} /></ToolBtn>
          </div>
          <div className="ml-[2px] mr-[5px] h-full w-px bg-[#b4b4b4]" />
          <div className="flex h-7"><Handle /></div>
          <div className="ml-px flex items-center">
            <ToolBtn label="Group"><People /></ToolBtn>
            <ToolBtn label="Ungroup"><Person /></ToolBtn>
            <Sep />
            <ToolBtn label="Flip vertical"><FlipV /></ToolBtn>
            <ToolBtn label="Flip horizontal"><FlipH /></ToolBtn>
            <ToolBtn label="Mirror across line"><Plane /></ToolBtn>
            <Sep />
            <ToolBtn label="Align centers"><Target /></ToolBtn>
            <ToolBtn label="Align vertical"><AlignV /></ToolBtn>
            <ToolBtn label="Align horizontal"><AlignH /></ToolBtn>
            <Sep />
            <ToolBtn label="Distribute vertical"><DistV /></ToolBtn>
            <ToolBtn label="Distribute horizontal"><DistH /></ToolBtn>
            <Sep />
            <ToolBtn label="Same width"><SpaceW /></ToolBtn>
            <ToolBtn label="Same height"><SpaceH /></ToolBtn>
            <ToolBtn label="Move to"><Cross /></ToolBtn>
          </div>
        </div>

        <div className={"flex h-[60px] shrink-0 items-center border-b border-[#b4b4b4] pl-1 " + MONO}>
          <div className="flex h-[52px]"><Handle /></div>
          <div className="ml-[5px] flex flex-col gap-[7px]">
            <PosField label="XPos" value="109.500" />
            <PosField label="YPos" value="79.000" />
          </div>
          <button aria-label="Lock aspect" className="ml-px flex h-[29px] w-[31px] items-center justify-center border border-[#90c8f6] bg-[#c0dcf3]"><Lock /></button>
          <div className="flex w-[38px] flex-col gap-[13px] text-right">
            <span>Width</span>
            <span>Height</span>
          </div>
          <div className="flex flex-1 flex-col items-end gap-[6px] pr-[15px] text-[#707070]">
            <div className="flex h-5 items-center">
              <Drop label="Font" value="" width="w-[120px]" look="border-[#d0d0d0] bg-[#f0f0f0] ring-2 ring-inset ring-white" dim />
              <div className="pl-[2px]"><DimField label="Height" value="25.00" lw="w-[40px]" iw="w-[46px]" /></div>
            </div>
            <div className="flex h-5 items-center">
              <label htmlFor="italic">Italic</label>
              <span className="mx-[2px] flex"><Toggle id="italic" label="Italic" look="dark" /></span>
              <label htmlFor="upper" className="pl-1">Upper Case</label>
              <span className="mx-[2px] flex"><Toggle id="upper" label="Upper Case" look="gray" on /></span>
              <span className="pl-1">Welded</span>
            </div>
          </div>
          <div className="grid grid-cols-[100px_106px_118px] items-center gap-x-[3px] gap-y-[6px] text-[#707070]">
            <DimField label="HSpace" value="0.00" lw="w-[40px]" iw="w-[46px]" />
            <div className="flex items-center justify-between pl-px"><span>Align X</span><Drop label="Align X" value="Middle" width="w-[62px]" look="border-[#bfbfbf] bg-[#cccccc] text-[#808080]" dim /></div>
            <Drop label="Text style" value="Normal" look="border-[#bfbfbf] bg-[#cccccc] text-[#808080]" dim />
            <DimField label="VSpace" value="0.00" lw="w-[40px]" iw="w-[46px]" />
            <div className="flex items-center justify-between pl-px"><span>Align Y</span><Drop label="Align Y" value="Middle" width="w-[62px]" look="border-[#bfbfbf] bg-[#cccccc] text-[#808080]" dim /></div>
            <DimField label="Offset" value="0" lw="w-[40px]" iw="w-[62px]" />
          </div>
          <div className="mr-1 h-full w-px bg-[#b4b4b4]" />
          <div className="flex h-[52px]"><Handle /></div>
          <div className="mt-[14px] flex w-[47px] items-start justify-between self-start pl-[6px] pr-px">
            <span className="mt-1"><Rotary /></span>
            <More />
          </div>
          <div className="mr-1 h-full w-px bg-[#b4b4b4]" />
          <div className="flex h-[52px]"><Handle /></div>
          <div className="flex w-[48px] items-center justify-between pl-[6px] pr-[3px]">
            <svg width="24" height="22" fill="none" stroke="#333" aria-hidden="true"><path d="M1.500 1.500h4v19h-4zM11.500 7.500h8v8h-8z" strokeWidth="1.400" /><path d="M6 11.500h5M21 8l2 2-2 2 2 2" stroke="#999" /></svg>
            <More />
          </div>
        </div>

        <main className="flex min-h-0 flex-1">
          <aside className="flex w-[62px] shrink-0 flex-col items-center border-r border-[#b4b4b4]">
            <div className="flex w-full flex-col pt-1"><Handle row /></div>
            <div className="flex w-full flex-col items-center border-b border-[#b4b4b4] pt-[2px]">
              <SideTool label="Select">{cursorI}</SideTool>
              <SideTool label="Draw lines">{pencilI}</SideTool>
              <SideTool label="Rectangle" active>{rectI}</SideTool>
              <SideTool label="Ellipse">{circleI}</SideTool>
              <SideTool label="Polygon">{hexI}</SideTool>
              <SideTool label="Edit nodes">{polyI}</SideTool>
              <SideTool label="Edit tabs">{frameI}</SideTool>
              <SideTool label="Text">{textI}</SideTool>
              <SideTool label="Position laser">{pinI}</SideTool>
              <SideTool label="Measure">{rulerI}</SideTool>
            </div>
            <div className="flex w-full flex-col pt-1"><Handle row /></div>
            <div className="flex flex-col items-center pt-[3px]">
              <SideTool label="Offset">{offsetI}</SideTool>
              <SideSep />
              <SideTool label="Weld">{unionI}</SideTool>
              <SideTool label="Union">{weldI}</SideTool>
              <SideTool label="Subtract">{subI}</SideTool>
              <SideTool label="Intersect">{interI}</SideTool>
              <SideSep />
              <SideTool label="Grid array"><DotsGrid /></SideTool>
              <SideTool label="Radial array">{circArrI}</SideTool>
              <SideSep />
              <SideTool label="Start point">{startPtI}</SideTool>
              <SideTool label="Radius">{radiusI}</SideTool>
            </div>
            <span className={"pt-px text-[#808080] " + MONO}>Radius:</span>
            <button aria-label="More tools" className="mt-[5px]"><svg width="6" height="8" fill="none" stroke="#000" strokeWidth="1.300" aria-hidden="true"><path d="M.5.500L3 3 5.500.500M.5 4.500L3 7l2.500-2.500" /></svg></button>
          </aside>
          <div className="mb-[2px] ml-[3px] mr-[7px] mt-[3px] min-w-0 flex-1 overflow-hidden bg-[#f8f8f8]"><Workspace /></div>
          <div className="flex w-[420px] shrink-0 flex-col">
            <CutsPanel />
            <LaserPanel />
          </div>
        </main>

        <footer className="shrink-0">
          <div className="flex h-8 items-center border-t border-white pl-1">
            <div className="flex h-[26px]"><Handle /></div>
            <div className="ml-[3px] flex items-center font-['Liberation_Sans',sans-serif] text-[13px] leading-4">
              {swatches.map(([n, bg, fg], i) => (
                <div key={n} className={"flex h-[29px] w-[31px] items-center justify-center " + (i === 0 ? "border border-[#90c8f6] bg-[#c0dcf3]" : "")}>
                  <button className={"h-6 w-6 " + bg + " " + fg}>{n}</button>
                </div>
              ))}
              <Sep />
              <div className="flex w-[31px] justify-center"><button className="h-6 w-6 bg-[#f56a22] text-[#5a1800]">T1</button></div>
              <div className="flex w-[31px] justify-center"><button className="h-6 w-6 bg-[#0c96d9] text-[#d8ecf8]">T2</button></div>
            </div>
          </div>
          <div className={"flex h-6 items-stretch gap-1 pb-px pl-[2px] pt-[5px] " + MONO}>
            <StatusToggle label="Move" width="w-[60px]" />
            <StatusToggle label="Size" width="w-[60px]" />
            <StatusToggle label="Rotate" width="w-[72px]" />
            <StatusToggle label="Shear" width="w-[84px]" />
            <pre className={"flex w-[304px] items-center border-r border-[#d0d0d0] pt-px " + MONO}>x: 143.00, y: -29.00 mm  w: 0.00,  h: 0.00</pre>
            <div className="flex-1 border-r border-[#d0d0d0]" />
            <div className="w-[123px] border-r border-[#d0d0d0]" />
            <svg width="16" height="18" fill="#b8b8b8" aria-hidden="true"><path d="M12 8h2v2h-2zM12 12h2v2h-2zM8 12h2v2H8zM12 16h2v2h-2zM8 16h2v2H8zM4 16h2v2H4z" /></svg>
          </div>
        </footer>
      </div>
    </div>
  );
}
